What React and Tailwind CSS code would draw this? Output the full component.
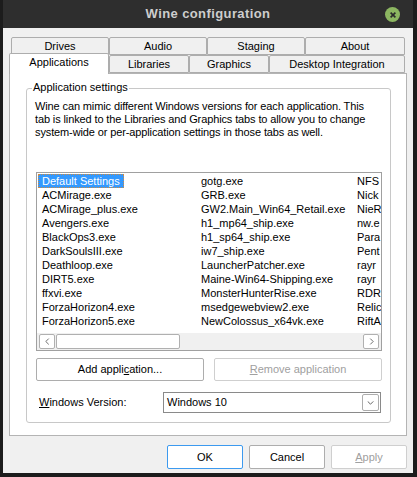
import React from "react";

const col1 = [
  "Default Settings",
  "ACMirage.exe",
  "ACMirage_plus.exe",
  "Avengers.exe",
  "BlackOps3.exe",
  "DarkSoulsIII.exe",
  "Deathloop.exe",
  "DIRT5.exe",
  "ffxvi.exe",
  "ForzaHorizon4.exe",
  "ForzaHorizon5.exe",
];
const col2 = [
  "gotg.exe",
  "GRB.exe",
  "GW2.Main_Win64_Retail.exe",
  "h1_mp64_ship.exe",
  "h1_sp64_ship.exe",
  "iw7_ship.exe",
  "LauncherPatcher.exe",
  "Maine-Win64-Shipping.exe",
  "MonsterHunterRise.exe",
  "msedgewebview2.exe",
  "NewColossus_x64vk.exe",
];
// third column is cut off by the list box edge
const col3 = ["NFS", "Nick", "NieR", "nw.e", "Para", "Pent", "rayr", "rayr", "RDR", "Relic", "RiftA"];

function Tab({ label, w, active }) {
  return (
    <div
      className={`${w} flex items-center justify-center border border-[#adadad] rounded-t-[2px] ${
        active
          ? "h-[21px] -mb-px bg-white border-b-0 relative z-10 pb-[3px]"
          : "h-[18px] bg-[#f0f0f0]"
      }`}
    >
      {label}
    </div>
  );
}

function Btn({ children, w, className = "" }) {
  return (
    <div
      className={`${w} flex items-center justify-center rounded-[2px] border bg-white ${className}`}
    >
      {children}
    </div>
  );
}

export default function App() {
  return (
    <div
      className="w-[417px] h-[477px] bg-[#1c1c1c] pl-[3px] overflow-hidden text-[11px] text-black"
      style={{ fontFamily: '"Liberation Sans", Arial, sans-serif' }}
    >
      {/* WINDOW */}
      <div className="w-[410px]">
        {/* TITLE BAR */}
        <div className="h-[28px] bg-[#2e2e2e] relative flex items-center justify-center">
          <span className="text-[13px] font-bold text-[#cdcdcd] tracking-[0.4px]">
            Wine configuration
          </span>
          <div className="absolute right-[13px] top-[7px] w-[15px] h-[15px] rounded-full bg-[#8cb661] flex items-center justify-center">
            <svg viewBox="0 0 10 10" className="w-[8px] h-[8px]">
              <path d="M2 2 L8 8 M8 2 L2 8" stroke="#2b2b2b" strokeWidth="2" />
            </svg>
          </div>
        </div>

        {/* BODY */}
        <div className="h-[445px] bg-[#f0f0f0] pt-[9px]">
          {/* TABS */}
          <div className="flex ml-[8px]">
            <Tab label="Drives" w="w-[98px]" />
            <Tab label="Audio" w="w-[98px]" />
            <Tab label="Staging" w="w-[98px]" />
            <Tab label="About" w="w-[100px]" />
          </div>
          <div className="flex items-end ml-[6px] h-[20px] -mt-[2px]">
            <Tab label="Applications" w="w-[100px]" active />
            <Tab label="Libraries" w="w-[80px]" />
            <Tab label="Graphics" w="w-[80px]" />
            <Tab label="Desktop Integration" w="w-[136px]" />
          </div>

          {/* PANEL */}
          <div className="ml-[6px] w-[398px] h-[363px] bg-white border border-[#b4b4b4] pt-[14px] pl-[16px]">
            <div className="relative w-[365px] h-[335px] border border-[#c8c8c8] rounded-[3px]">
              <span className="absolute -top-[8px] left-[5px] bg-white px-[1px] leading-[13px]">
                Application settings
              </span>
              <p className="mt-[11px] ml-[8px] leading-[13px] whitespace-nowrap tracking-[-0.12px]">
                Wine can mimic different Windows versions for each application. This
                <br />
                tab is linked to the Libraries and Graphics tabs to allow you to change
                <br />
                system-wide or per-application settings in those tabs as well.
              </p>

              {/* LIST */}
              <div className="mt-[33px] ml-[9px] w-[346px] h-[179px] border border-[#a0a0a0] flex flex-col">
                <div className="flex pt-px pl-px h-[158px] overflow-hidden">
                  <div className="w-[159px] shrink-0 flex flex-col">
                    {col1.map((t, i) => (
                      <div key={t} className="h-[14px] leading-[14px]">
                        {i === 0 ? (
                          <span className="inline-block h-[14px] leading-[12px] bg-[#3399ff] text-white px-[3px] border border-dotted border-[#d08a40]">
                            {t}
                          </span>
                        ) : (
                          <span className="pl-[4px]">{t}</span>
                        )}
                      </div>
                    ))}
                  </div>
                  <div className="w-[156px] shrink-0 flex flex-col">
                    {col2.map((t) => (
                      <div key={t} className="h-[14px] leading-[14px] pl-[4px]">
                        {t}
                      </div>
                    ))}
                  </div>
                  <div className="flex-1 flex flex-col">
                    {col3.map((t, i) => (
                      <div key={i} className="h-[14px] leading-[14px] pl-[4px] whitespace-nowrap">
                        {t}
                      </div>
                    ))}
                  </div>
                </div>
                {/* H SCROLLBAR */}
                <div className="h-[17px] mt-auto bg-[#f0f0f0] flex items-center px-[2px] gap-px">
                  <div className="w-[16px] h-[15px] bg-white border border-[#b0b0b0] rounded-[2px] flex items-center justify-center">
                    <svg viewBox="0 0 6 8" className="w-[5px] h-[7px]">
                      <path d="M4.5 0.5 L1 4 L4.5 7.5" fill="none" stroke="#505050" />
                    </svg>
                  </div>
                  <div className="w-[124px] h-[15px] bg-white border border-[#b0b0b0] rounded-[2px]" />
                  <div className="ml-auto w-[16px] h-[15px] bg-white border border-[#b0b0b0] rounded-[2px] flex items-center justify-center">
                    <svg viewBox="0 0 6 8" className="w-[5px] h-[7px]">
                      <path d="M1.5 0.5 L5 4 L1.5 7.5" fill="none" stroke="#505050" />
                    </svg>
                  </div>
                </div>
              </div>

              {/* BUTTONS */}
              <div className="flex ml-[9px] mt-[7px] gap-[10px] h-[23px]">
                <Btn w="w-[168px]" className="border-[#adadad]">
                  Add appli<span className="underline">c</span>ation...
                </Btn>
                <Btn w="w-[168px]" className="border-[#cfcfcf] text-[#a0a0a0]">
                  <span className="underline">R</span>emove application
                </Btn>
              </div>

              {/* WINDOWS VERSION */}
              <div className="flex items-center ml-[12px] mt-[11px] h-[21px]">
                <span className="w-[124px]">
                  <span className="underline">W</span>indows Version:
                </span>
                <div className="w-[218px] h-[21px] border border-[#8a8a8a] bg-white flex items-center pl-[3px] pr-[1px]">
                  <span>Windows 10</span>
                  <div className="ml-auto w-[17px] h-[17px] border border-[#adadad] rounded-[2px] flex items-center justify-center">
                    <svg viewBox="0 0 8 5" className="w-[7px] h-[4px]">
                      <path d="M0.5 0.5 L4 4 L7.5 0.5" fill="none" stroke="#404040" />
                    </svg>
                  </div>
                </div>
              </div>
            </div>
          </div>

          {/* DIALOG BUTTONS */}
          <div className="flex justify-end gap-[6px] mr-[6px] mt-[9px] h-[24px]">
            <Btn w="w-[76px]" className="border-[#3c9aef]">OK</Btn>
            <Btn w="w-[76px]" className="border-[#adadad]">Cancel</Btn>
            <Btn w="w-[76px]" className="border-[#cfcfcf] text-[#a0a0a0]">
              <span className="underline">A</span>pply
            </Btn>
          </div>
        </div>
      </div>
    </div>
  );
}
